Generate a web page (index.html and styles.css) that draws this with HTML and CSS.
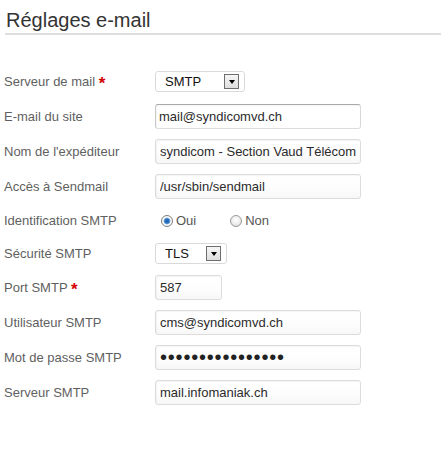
FILE: index.html
```html
<!DOCTYPE html>
<html lang="fr">
<head>
<meta charset="utf-8">
<title>Réglages e-mail</title>
<link rel="stylesheet" href="styles.css">
</head>
<body>
<div class="page">
  <h1 class="title">Réglages e-mail</h1>
  <form class="form">
    <div class="row">
      <label class="label">Serveur de mail <span class="req">*</span></label>
      <div class="select select-wide"><span class="select-text">SMTP</span><span class="select-btn"><span class="tri"></span></span></div>
    </div>
    <div class="row">
      <label class="label" for="f-email">E-mail du site</label>
      <input class="input input-focus" id="f-email" type="text" value="mail@syndicomvd.ch">
    </div>
    <div class="row">
      <label class="label" for="f-name">Nom de l'expéditeur</label>
      <input class="input" id="f-name" type="text" value="syndicom - Section Vaud Télécommunications">
    </div>
    <div class="row">
      <label class="label" for="f-sendmail">Accès à Sendmail</label>
      <input class="input" id="f-sendmail" type="text" value="/usr/sbin/sendmail">
    </div>
    <div class="row row-tight">
      <span class="label">Identification SMTP</span>
      <div class="radios">
        <label class="radio-opt"><input class="radio" type="radio" name="auth" checked> Oui</label>
        <label class="radio-opt"><input class="radio" type="radio" name="auth"> Non</label>
      </div>
    </div>
    <div class="row row-tight">
      <label class="label">Sécurité SMTP</label>
      <div class="select select-narrow"><span class="select-text">TLS</span><span class="select-btn"><span class="tri"></span></span></div>
    </div>
    <div class="row">
      <label class="label" for="f-port">Port SMTP <span class="req">*</span></label>
      <input class="input input-short" id="f-port" type="text" value="587">
    </div>
    <div class="row">
      <label class="label" for="f-user">Utilisateur SMTP</label>
      <input class="input" id="f-user" type="text" value="cms@syndicomvd.ch">
    </div>
    <div class="row">
      <label class="label" for="f-pass">Mot de passe SMTP</label>
      <input class="input input-pass" id="f-pass" type="password" value="abcdefghijklmnop">
    </div>
    <div class="row">
      <label class="label" for="f-host">Serveur SMTP</label>
      <input class="input" id="f-host" type="text" value="mail.infomaniak.ch">
    </div>
  </form>
</div>
</body>
</html>
```
FILE: styles.css
```css
html, body {
  margin: 0;
  padding: 0;
  background: #fff;
}

body {
  font-family: "Liberation Sans", Arial, sans-serif;
  font-size: 13px;
  color: #333;
}

.page {
  width: 441px;
}

.title {
  margin: 0 0 0 5px;
  padding: 8px 0 1px 1px;
  font-size: 20px;
  line-height: 24px;
  font-weight: normal;
  color: #333;
  border-bottom: 2px solid #dedede;
}

.form {
  margin-top: 29px;
  padding-left: 4px;
}

.row {
  display: flex;
  align-items: center;
  height: 35px;
}

.row-tight {
  height: 33px;
}

.label {
  width: 151px;
  flex: none;
  color: #5f5f5f;
  font-size: 13px;
}

.req {
  color: #d40000;
  font-weight: bold;
  font-size: 17px;
  line-height: 10px;
  position: relative;
  top: 3px;
}

.input {
  box-sizing: border-box;
  width: 206px;
  height: 25px;
  margin: 0;
  padding: 0 4px;
  border: 1px solid #dcdcdc;
  border-radius: 3px;
  background: linear-gradient(to bottom, #fff 0%, #fdfdfd 60%, #f7f7f7 100%);
  box-shadow: inset 1px 1px 1px rgba(0, 0, 0, 0.04);
  font-family: "Liberation Sans", Arial, sans-serif;
  font-size: 13px;
  color: #2b2b2b;
  outline: none;
}

.input-focus {
  border-color: #c4c4c4 #d8d8d8 #dcdcdc #c8c8c8;
  border-top-color: #a9a9a9;
  background: #fff;
  padding-left: 3px;
}

.input-short {
  width: 67px;
}

.input-pass {
  font-size: 20px;
  letter-spacing: 0.8px;
  color: #222;
}

.select {
  box-sizing: border-box;
  height: 21px;
  display: flex;
  align-items: center;
  justify-content: space-between;
  padding: 0 5px 0 9px;
  border: 1px solid #dadada;
  border-radius: 3px;
  background: #fff;
  color: #111;
  font-size: 13px;
}

.select-wide {
  width: 90px;
}

.select-narrow {
  width: 72px;
}

.select-btn {
  box-sizing: border-box;
  width: 15px;
  height: 15px;
  border: 1px solid #6e6e6e;
  background: linear-gradient(to bottom, #f6f6f6, #dedede);
  display: flex;
  align-items: center;
  justify-content: center;
}

.tri {
  width: 0;
  height: 0;
  border-left: 3.5px solid transparent;
  border-right: 3.5px solid transparent;
  border-top: 4px solid #000;
  margin-top: 1px;
}

.radios {
  display: flex;
  align-items: center;
  gap: 34px;
  padding-left: 6px;
}

.radio-opt {
  display: flex;
  align-items: center;
  gap: 3px;
  color: #555;
  font-size: 13px;
}

.radio {
  -webkit-appearance: none;
  appearance: none;
  box-sizing: border-box;
  width: 12px;
  height: 12px;
  margin: 0;
  border: 1px solid #9a9a9a;
  border-radius: 50%;
  background: radial-gradient(circle at 50% 40%, #ffffff 0, #f2f2f2 40%, #d6d6d6 100%);
}

.radio:checked {
  border-color: #7d7d7d;
  background: radial-gradient(circle, #1f5fa8 0, #2f74c4 2.2px, #8db8e6 3.2px, #ffffff 3.8px, #ececec 100%);
}
```
